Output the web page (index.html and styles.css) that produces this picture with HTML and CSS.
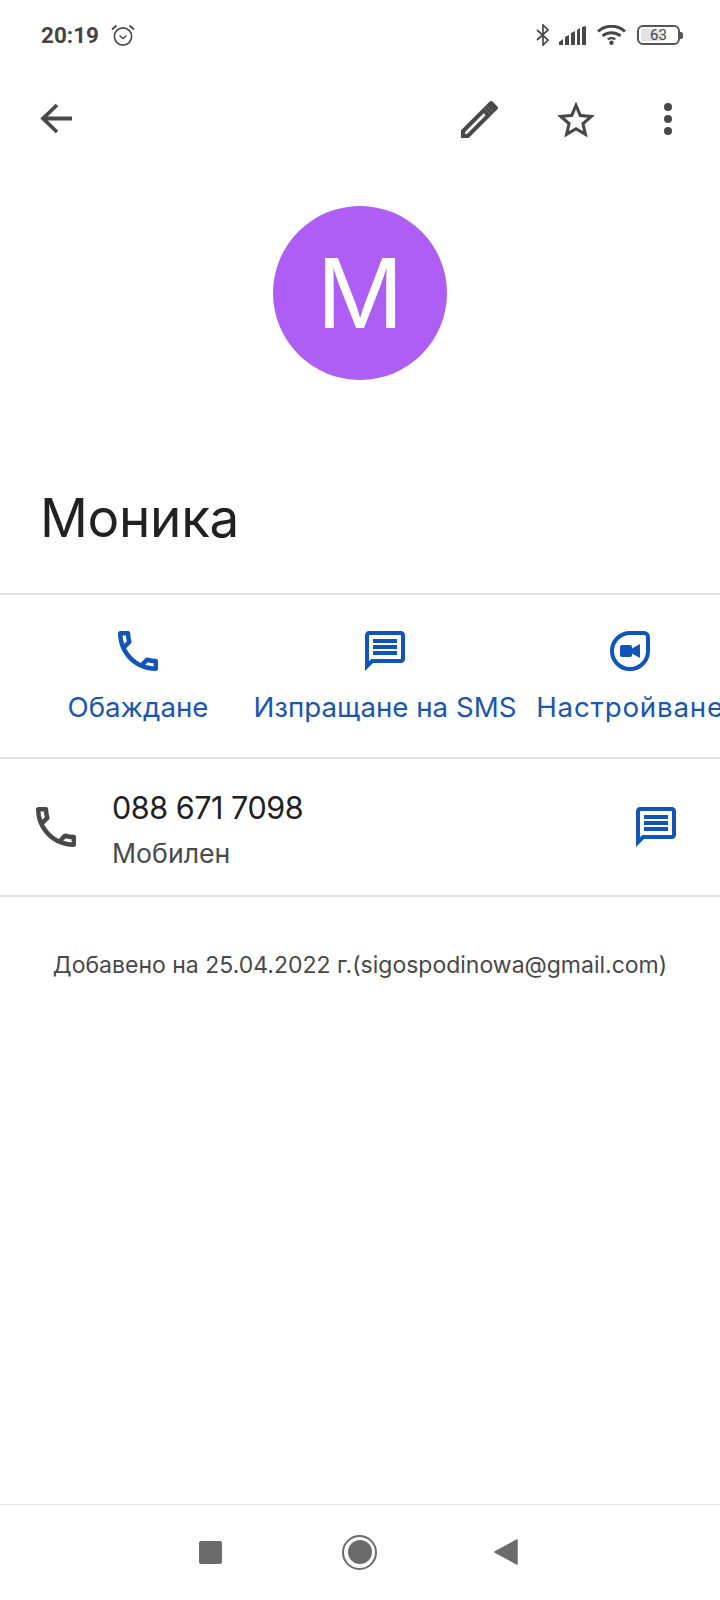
FILE: index.html
```html
<!DOCTYPE html>
<html lang="bg">
<head>
<meta charset="utf-8">
<title>Моника</title>
<link rel="stylesheet" href="styles.css">
</head>
<body>
<div class="screen">
  <div class="status">
    <span class="time">20:19</span>
    <svg class="alarm" viewBox="0 0 24 22"><g fill="none" stroke="#484848" stroke-width="1.6"><circle cx="12" cy="12.5" r="8.6"/><path d="M8.5 11.5l3.5 3 3.500-3" stroke-width="1.500"/><path d="M1 5.500L5.500 1.500M23 5.500L18.500 1.500" stroke-width="1.700"/></g></svg>
    <span class="spacer"></span>
    <svg class="bt" viewBox="0 0 14 22"><path d="M1 6l11 10-5 5V1l5 5L1 16" fill="none" stroke="#484848" stroke-width="1.700"/></svg>
    <svg class="signal" viewBox="0 0 27 19"><path d="M0 19v-3l4-3v6zM6 19v-8l4-2v10zM12 19V7l4-2v14zM18 19V4l3-2v17zM23 19V1l4-1v19z" fill="#484848"/></svg>
    <svg class="wifi" viewBox="0 0 29 20"><g fill="none" stroke="#484848" stroke-width="3"><path d="M1 6.500c7.500-7 19.500-7 27 0"/><path d="M5.500 11c5-4.500 13-4.500 18 0"/></g><path d="M10 13.500c2.500-2 6.500-2 9 0l-1.500 1.700c-1.700-1.300-4.300-1.300-6 0z" fill="#484848"/><circle cx="14.500" cy="17.800" r="2.200" fill="#484848"/></svg>
    <span class="battery"><span class="batt-fill"></span><span class="batt-num">63</span></span>
    <span class="batt-nub"></span>
  </div>

  <div class="toolbar">
    <svg class="ic-back" viewBox="0 0 32 32"><path d="M32 15.500H4M17 2L3 15.500 17 29" fill="none" stroke="#484848" stroke-width="3.800"/></svg>
    <span class="spacer"></span>
    <svg class="ic-edit" viewBox="3 3 18 18"><path fill="#484848" d="M14.060 9.020l.92.92L5.920 19H5v-.92l9.060-9.060M17.660 3c-.25 0-.51.1-.7.29l-1.830 1.830 3.750 3.750 1.830-1.830c.39-.39.39-1.020 0-1.410l-2.340-2.340c-.2-.2-.45-.29-.71-.29zm-3.600 3.190L3 17.250V21h3.750L17.810 9.940l-3.750-3.750z"/><path fill="#484848" d="M15.130 5.120l3.750 3.750-1.070 1.070-3.750-3.750z"/></svg>
    <svg class="ic-star" viewBox="2 2 20 19"><path fill="#484848" d="M22 9.240l-7.190-.62L12 2 9.190 8.630 2 9.240l5.460 4.730L5.820 21 12 17.270 18.180 21l-1.630-7.030L22 9.240zM12 15.400l-3.760 2.270 1-4.280-3.320-2.880 4.380-.38L12 6.100l1.710 4.040 4.380.38-3.320 2.880 1 4.280L12 15.400z"/></svg>
    <svg class="ic-more" viewBox="0 0 8 32"><circle cx="4" cy="4" r="4" fill="#484848"/><circle cx="4" cy="16" r="4" fill="#484848"/><circle cx="4" cy="28" r="4" fill="#484848"/></svg>
  </div>

  <div class="avatar">M</div>
  <h1 class="name">Моника</h1>

  <div class="actions">
    <div class="action a-call">
      <svg class="ic40" viewBox="3 3 18 18"><path class="blue" d="M6.540 5c.06.89.21 1.760.45 2.590l-1.200 1.200c-.41-1.200-.67-2.470-.76-3.790h1.510m9.860 12.020c.85.24 1.720.39 2.600.45v1.490c-1.320-.09-2.590-.35-3.800-.75l1.200-1.190M7.500 3H4c-.55 0-1 .45-1 1 0 9.390 7.610 17 17 17 .55 0 1-.45 1-1v-3.490c0-.55-.45-1-1-1-1.240 0-2.450-.2-3.570-.57-.1-.04-.21-.05-.31-.05-.26 0-.51.1-.71.29l-2.200 2.200c-2.830-1.450-5.150-3.760-6.590-6.590l2.200-2.200c.28-.28.36-.67.25-1.020C8.700 6.450 8.500 5.250 8.500 4c0-.55-.45-1-1-1z"/></svg>
      <span class="a-label">Обаждане</span>
    </div>
    <div class="action a-sms">
      <svg class="ic40" viewBox="2 2 20 20"><path class="blue" d="M20 2H4c-1.100 0-1.990.9-1.990 2L2 22l4-4h14c1.100 0 2-.9 2-2V4c0-1.100-.9-2-2-2zm0 14H5.170L4 17.170V4h16v12zM6 12h12v2H6zm0-3h12v2H6zm0-3h12v2H6z"/></svg>
      <span class="a-label">Изпращане на SMS</span>
    </div>
    <div class="action a-video">
      <svg class="ic40" viewBox="0 0 40 40"><path d="M20 2H34a4 4 0 0 1 4 4V20A18 18 0 1 1 20 2z" fill="none" stroke="#0f55bb" stroke-width="4"/><rect class="blue" x="10" y="14" width="12" height="12" rx="2"/><path class="blue" d="M21 18l9-5v14l-9-5z"/></svg>
      <span class="a-label a-label-wide">Настройване</span>
    </div>
  </div>

  <div class="phone-row">
    <svg class="ic40 ph-ic" viewBox="3 3 18 18"><path fill="#484848" d="M6.540 5c.06.89.21 1.760.45 2.590l-1.200 1.200c-.41-1.200-.67-2.470-.76-3.790h1.510m9.860 12.020c.85.24 1.720.39 2.600.45v1.490c-1.320-.09-2.590-.35-3.800-.75l1.200-1.190M7.500 3H4c-.55 0-1 .45-1 1 0 9.390 7.610 17 17 17 .55 0 1-.45 1-1v-3.490c0-.55-.45-1-1-1-1.240 0-2.450-.2-3.570-.57-.1-.04-.21-.05-.31-.05-.26 0-.51.1-.71.29l-2.200 2.200c-2.830-1.450-5.150-3.760-6.590-6.590l2.200-2.200c.28-.28.36-.67.25-1.020C8.700 6.450 8.500 5.250 8.500 4c0-.55-.45-1-1-1z"/></svg>
    <div class="ph-text">
      <div class="ph-num">088 671 7098</div>
      <div class="ph-type">Мобилен</div>
    </div>
    <svg class="ic40" viewBox="2 2 20 20"><path class="blue" d="M20 2H4c-1.100 0-1.990.9-1.990 2L2 22l4-4h14c1.100 0 2-.9 2-2V4c0-1.100-.9-2-2-2zm0 14H5.170L4 17.170V4h16v12zM6 12h12v2H6zm0-3h12v2H6zm0-3h12v2H6z"/></svg>
  </div>

  <p class="added">Добавено на 25.04.2022 г.(sigospodinowa@gmail.com)</p>

  <div class="nav">
    <span class="nav-square"></span>
    <span class="nav-home"><span class="nav-dot"></span></span>
    <svg class="nav-tri" viewBox="0 0 24 26"><path d="M23 1v24L1 13z" fill="#6b6b6b" stroke="#6b6b6b" stroke-width="1.500" stroke-linejoin="round"/></svg>
  </div>
</div>
</body>
</html>
```

FILE: styles.css
```css
* { box-sizing: border-box; }
html, body { margin: 0; padding: 0; background: #fff; }
body { font-family: Inter, "Noto Sans", Roboto, sans-serif; }
.screen { width: 720px; height: 1600px; display: flex; flex-direction: column; overflow: hidden; background: #fff; }
.spacer { flex: 1; }
.blue { fill: #0f55bb; }

.status { height: 70px; padding: 0 37px 0 41px; display: flex; align-items: center; flex: none; }
.time { font: 700 22.500px/1 Roboto, sans-serif; color: #444; }
.alarm { width: 24px; height: 22px; margin-left: 12px; }
.bt { width: 14px; height: 22px; }
.signal { width: 27px; height: 19px; margin-left: 9px; }
.wifi { width: 29px; height: 20px; margin-left: 11px; }
.battery { width: 43px; height: 20px; margin-left: 11px; border: 2.500px solid #555; border-radius: 6px; display: flex; align-items: center; justify-content: center; position: relative; }
.batt-fill { position: absolute; left: 2px; top: 2px; bottom: 2px; width: 22px; background: #e2e2e2; }
.batt-num { position: relative; font: 400 15px/1 Roboto, sans-serif; color: #444; }
.batt-nub { width: 3px; height: 7px; background: #555; border-radius: 0 2px 2px 0; }

.toolbar { height: 98px; flex: none; padding: 0 48px 0 40px; display: flex; align-items: center; }
.ic-back { width: 32px; height: 32px; }
.ic-edit { width: 37px; height: 37px; }
.ic-star { width: 38px; height: 37px; margin-left: 59px; }
.ic-more { width: 8px; height: 32px; margin-left: 69px; }

.avatar { width: 174px; height: 174px; flex: none; margin: 38px auto 0; border-radius: 50%; background: #ae5ef4; color: #fff; display: flex; align-items: center; justify-content: center; font: 400 96px/1 Inter, sans-serif; }
.name { margin: 100px 0 0; padding-left: 40px; font-size: 53px; font-weight: 400; line-height: 76px; color: #212121; height: 113px; letter-spacing: -0.3px; }

.actions { flex: none; height: 166px; border-top: 2px solid #e2e2e2; border-bottom: 2px solid #e2e2e2; padding: 36px 0 0 46px; display: flex; overflow: hidden; }
.action { flex: none; display: flex; flex-direction: column; align-items: center; }
.a-call { width: 184px; }
.a-sms { width: 310px; }
.a-video { width: 180px; }
.ic40 { width: 40px; height: 40px; flex: none; }
.a-label { margin-top: 18px; font-size: 27.700px; line-height: 36px; color: #1a56b0; white-space: nowrap; }
.a-label-wide { letter-spacing: 0.8px; }

.phone-row { flex: none; height: 138px; border-bottom: 2px solid #e2e2e2; padding: 0 44px 0 36px; display: flex; align-items: center; }
.ph-ic { margin-right: 36px; }
.ph-text { flex: 1; margin-top: 5px; }
.ph-num { font-size: 30.500px; line-height: 42px; letter-spacing: -0.45px; color: #212121; }
.ph-type { margin-top: 5px; font-size: 26.700px; line-height: 38px; color: #4a4a4a; }

.added { margin: 51px 0 0; text-align: center; font-size: 23px; line-height: 34px; color: #484848; white-space: nowrap; }

.nav { margin-top: auto; height: 96px; flex: none; border-top: 1px solid #e4e4e4; padding-bottom: 1px; display: flex; align-items: center; padding-left: 199px; }
.nav-square { width: 23px; height: 23px; background: #6b6b6b; border-radius: 2px; }
.nav-home { width: 35px; height: 35px; margin-left: 120px; border: 2.500px solid #6b6b6b; border-radius: 50%; display: flex; align-items: center; justify-content: center; }
.nav-dot { width: 24px; height: 24px; border-radius: 50%; background: #6b6b6b; }
.nav-tri { width: 24px; height: 26px; margin-left: 117px; }
```
